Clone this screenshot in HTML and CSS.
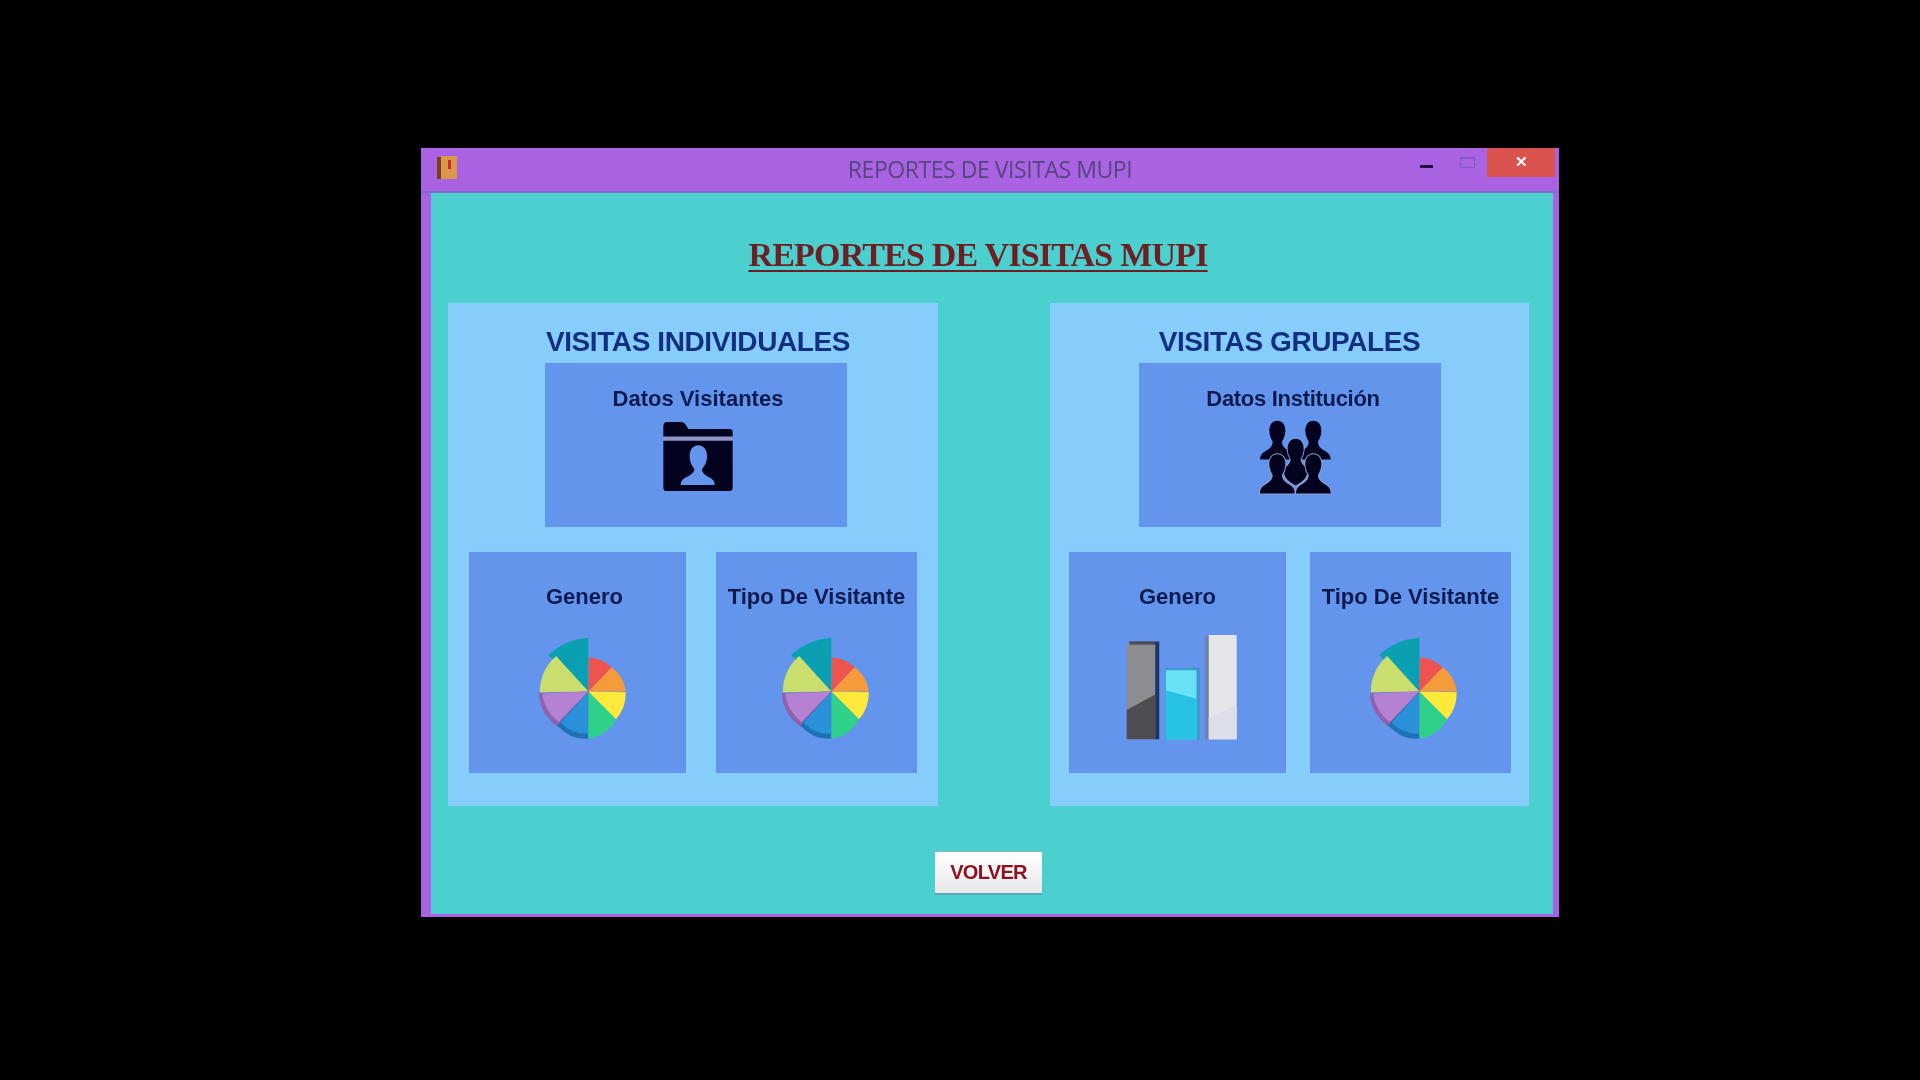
FILE: index.html
```html
<!DOCTYPE html>
<html>
<head>
    <title>Reportes de Visitas MUPI</title>
    <link rel="stylesheet" href="styles.css">
</head>
<body>
    <svg class="icon-defs">
        <symbol id="pie" viewBox="90 50 265 300">
            <path fill="#0b9fb2" d="M238 210V55Q170 60 122 105Z"/>
            <path fill="#c9de6d" d="M238 210L145 108Q98 150 98 212Z"/>
            <path fill="#8f62b0" d="M238 210L95 215Q98 275 150 312Z"/>
            <path fill="#b581d3" d="M238 210L105 216Q110 265 152 298Z"/>
            <path fill="#1f72b5" d="M238 210L148 308Q190 352 238 346Z"/>
            <path fill="#2b91da" d="M238 210L158 300Q195 335 238 332Z"/>
            <path fill="#2fd08a" d="M238 210V345Q290 340 318 290Z"/>
            <path fill="#ffe93b" d="M238 210L318 290Q346 258 346 212Z"/>
            <path fill="#f59b3a" d="M238 210H346Q340 165 305 140Z"/>
            <path fill="#ee5350" d="M238 210L305 140Q275 113 240 112Z"/>
        </symbol>
    </svg>

    <div class="window">
        <div class="titlebar">
            <svg class="app-icon" viewBox="0 0 20 24">
                <rect x="0" y="1" width="5" height="22" fill="#7d3a24"/>
                <rect x="4" y="0" width="16" height="23" fill="#d8974a"/>
                <rect x="11" y="4" width="3" height="9" fill="#c9302c"/>
            </svg>
            <div class="titlebar-text">REPORTES DE VISITAS MUPI</div>
            <div class="win-controls">
                <span class="win-min"></span>
                <span class="win-max"></span>
                <span class="win-close">✕</span>
            </div>
        </div>

        <div class="content">
            <h1 class="main-title">REPORTES DE VISITAS MUPI</h1>

            <div class="panels">
                <section class="panel panel-individual">
                    <h2 class="panel-title">VISITAS INDIVIDUALES</h2>
                    <div class="card card-top">
                        <div class="card-label label-visitantes">Datos Visitantes</div>
                        <svg class="icon-folder" viewBox="70 65 208 207">
                            <path fill="#03031f" d="M70 78Q70 65 82 65H122Q132 65 138 75L145 86H268Q278 86 278 96V109H70Z"/>
                            <rect x="70" y="109" width="208" height="12" fill="#8f95c0"/>
                            <path fill="#03031f" fill-rule="evenodd" d="M70 121H278V262Q278 272 268 272H80Q70 272 70 262ZM175 135C158 135 148 150 149 170C150 188 157 198 163 206C163 218 152 224 136 232C127 236 122 243 122 254H224C224 243 219 236 210 232C194 224 186 218 186 206C193 198 200 188 201 170C202 150 192 135 175 135Z"/>
                        </svg>
                    </div>
                    <div class="card-row">
                        <div class="card card-wide">
                            <div class="card-label label-shift">Genero</div>
                            <svg class="icon-pie"><use href="#pie"/></svg>
                        </div>
                        <div class="card card-narrow">
                            <div class="card-label">Tipo De Visitante</div>
                            <svg class="icon-pie pie-right"><use href="#pie"/></svg>
                        </div>
                    </div>
                </section>

                <section class="panel panel-group">
                    <h2 class="panel-title">VISITAS GRUPALES</h2>
                    <div class="card card-top">
                        <div class="card-label label-institucion">Datos Institución</div>
                        <svg class="icon-people" viewBox="85 58 216 224">
                            <path class="bust" d="M140 60C124 60 115 74 116 92C117 106 122 116 126 122C126 136 118 143 106 150C94 156 88 164 88 176H192C192 164 186 156 174 150C162 143 154 136 154 122C158 116 163 106 164 92C165 74 156 60 140 60Z"/>
                            <path class="bust" d="M248 60C232 60 223 74 224 92C225 106 230 116 234 122C234 136 226 143 214 150C202 156 196 164 196 176H300C300 164 294 156 282 150C270 143 262 136 262 122C266 116 271 106 272 92C273 74 264 60 248 60Z"/>
                            <path class="bust-front" d="M195 114C179 114 170 128 171 146C172 160 176 168 180 174C180 186 172 194 162 202C156 222 165 238 195 254C225 238 234 222 228 202C218 194 210 186 210 174C214 168 218 160 219 146C220 128 211 114 195 114Z"/>
                            <path class="bust-front" d="M140 160C124 160 115 174 116 192C117 206 122 216 126 222C126 236 118 243 106 250C94 256 88 264 88 278H192C192 264 186 256 174 250C162 243 154 236 154 222C158 216 163 206 164 192C165 174 156 160 140 160Z"/>
                            <path class="bust-front" d="M248 160C232 160 223 174 224 192C225 206 230 216 234 222C234 236 226 243 214 250C202 256 196 264 196 278H300C300 264 294 256 282 250C270 243 262 236 262 222C266 216 271 206 272 192C273 174 264 160 248 160Z"/>
                        </svg>
                    </div>
                    <div class="card-row">
                        <div class="card card-wide">
                            <div class="card-label">Genero</div>
                            <svg class="icon-bars" viewBox="50 40 340 325">
                                <rect x="60" y="65" width="90" height="12" fill="#4a4b55"/>
                                <rect x="136" y="68" width="14" height="292" fill="#1f3566"/>
                                <rect x="52" y="75" width="86" height="285" fill="#8d8c8e"/>
                                <polygon points="52,272 138,225 138,360 52,360" fill="#4d4e52"/>
                                <rect x="168" y="145" width="104" height="215" fill="#3f97d2"/>
                                <rect x="170" y="152" width="92" height="208" fill="#68e2f4"/>
                                <polygon points="170,212 262,238 262,360 170,360" fill="#28c2e4"/>
                                <rect x="288" y="48" width="12" height="312" fill="#6f80a8"/>
                                <rect x="299" y="46" width="84" height="314" fill="#e6e6ea"/>
                                <polygon points="299,295 383,258 383,360 299,360" fill="#dcdfe9"/>
                            </svg>
                        </div>
                        <div class="card card-narrow">
                            <div class="card-label">Tipo De Visitante</div>
                            <svg class="icon-pie pie-group"><use href="#pie"/></svg>
                        </div>
                    </div>
                </section>
            </div>

            <button class="back-btn">VOLVER</button>
        </div>
    </div>
</body>
</html>
```

FILE: styles.css
```css
* {
    box-sizing: border-box;
}

html, body {
    height: 100%;
    margin: 0;
}

body {
    background-color: #000;
    padding: 148px 0 0 421px;
    overflow: hidden;
    font-family: "Liberation Sans", Arial, sans-serif;
}

.icon-defs {
    display: none;
}

.window {
    width: 1138px;
    height: 769px;
    background-color: #a962e1;
    padding: 0 6px 3px 10px;
    display: flex;
    flex-direction: column;
    filter: blur(0.7px);
}

.titlebar {
    height: 45px;
    margin-left: -10px;
    margin-right: -6px;
    display: flex;
    align-items: flex-start;
    position: relative;
    border-bottom: 2px solid #7f6bd0;
}

.app-icon {
    width: 20px;
    height: 24px;
    margin: 8px 0 0 16px;
}

.titlebar-text {
    position: absolute;
    left: 0;
    right: 0;
    top: 5px;
    text-align: center;
    font-family: "Open Sans", sans-serif;
    font-size: 23px;
    letter-spacing: -0.45px;
    color: #55467f;
}

.win-controls {
    margin-left: auto;
    margin-right: 4px;
    display: flex;
    align-items: flex-start;
}

.win-min {
    width: 13px;
    height: 3px;
    background-color: #1d1140;
    margin-top: 17px;
    margin-right: 27px;
}

.win-max {
    width: 15px;
    height: 11px;
    border: 1px solid #7b5cc0;
    border-top-width: 2px;
    margin-top: 9px;
    margin-right: 12px;
}

.win-close {
    width: 68px;
    height: 29px;
    background-color: #d9544f;
    color: #fff;
    font-size: 15px;
    font-weight: bold;
    text-align: center;
    line-height: 27px;
}

.content {
    flex: 1;
    background-color: #4bd0cf;
    display: flex;
    flex-direction: column;
}

.main-title {
    height: 110px;
    margin: 0;
    padding: 43px 28px 0 0;
    text-align: center;
    font-family: "Liberation Serif", serif;
    font-size: 34px;
    font-weight: bold;
    letter-spacing: -0.8px;
    color: #6e1f24;
    text-decoration: underline;
    text-decoration-thickness: 2px;
    text-underline-offset: 4px;
}

.panels {
    display: flex;
    gap: 112px;
    padding-left: 17px;
}

.panel {
    height: 503px;
    background-color: #87cdfc;
    display: flex;
    flex-direction: column;
}

.panel-individual {
    width: 490px;
}

.panel-group {
    width: 479px;
}

.panel-title {
    height: 60px;
    margin: 0;
    padding-top: 23px;
    font-size: 28px;
    font-weight: bold;
    color: #12307f;
    text-align: center;
    letter-spacing: -0.4px;
}

.panel-individual .panel-title {
    padding-left: 10px;
}

.panel-individual .card-top {
    margin-left: 97px;
}

.panel-group .card-top {
    margin-left: 89px;
}

.card {
    background-color: #6495ed;
    display: flex;
    flex-direction: column;
    align-items: center;
}

.card-top {
    width: 302px;
    height: 164px;
}

.card-top .card-label {
    margin-top: 24px;
}

.card-row {
    display: flex;
    margin-top: 25px;
}

.panel-individual .card-row {
    padding-left: 21px;
    gap: 30px;
}

.panel-group .card-row {
    padding-left: 19px;
    gap: 24px;
}

.card-wide {
    width: 217px;
    height: 221px;
}

.card-narrow {
    width: 201px;
    height: 221px;
}

.card-label {
    margin-top: 33px;
    font-size: 22px;
    font-weight: bold;
    color: #0d1a50;
    line-height: 24px;
    white-space: nowrap;
    letter-spacing: 0;
}

.label-shift {
    margin-left: 14px;
}

.label-visitantes {
    margin-left: 4px;
}

.label-institucion {
    margin-left: 6px;
    letter-spacing: -0.3px;
}

.icon-folder {
    width: 70px;
    height: 69px;
    margin-top: 11px;
    margin-left: 4px;
}

.icon-people {
    width: 72px;
    height: 75px;
    margin-top: 9px;
    margin-left: 9px;
}

.bust,
.bust-front {
    fill: #03031f;
}

.bust-front {
    stroke: #8aa0cc;
    stroke-width: 6px;
    paint-order: stroke;
}

.icon-pie {
    width: 92px;
    height: 104px;
    margin-top: 27px;
    margin-left: 10px;
}

.pie-right {
    margin-left: 19px;
}

.pie-group {
    margin-left: 7px;
}

.icon-bars {
    width: 113px;
    height: 108px;
    margin-top: 24px;
    margin-left: 10px;
}

.back-btn {
    width: 107px;
    height: 44px;
    margin: 45px 0 0 504px;
    padding: 0;
    background: linear-gradient(#fff, #e8e8ea);
    border: none;
    border-top: 1px solid #88b8c8;
    border-bottom: 2px solid #5aa5b8;
    font-family: "Liberation Sans", sans-serif;
    font-size: 20px;
    font-weight: bold;
    letter-spacing: -0.7px;
    color: #8b1320;
}
```
